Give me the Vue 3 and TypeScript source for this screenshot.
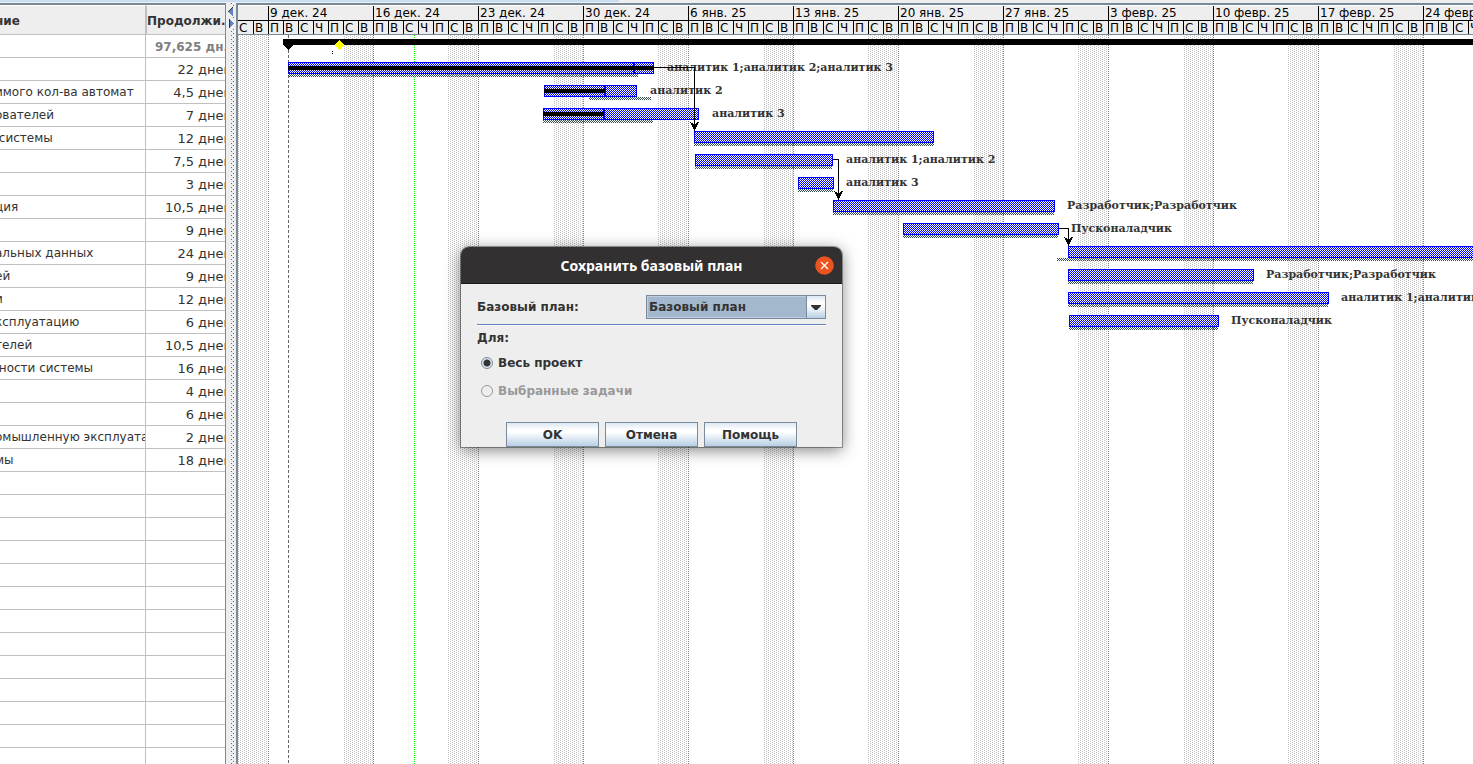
<script setup lang="ts">
import { ref } from 'vue'

interface Row {
  name: string
  duration: string
  total?: boolean
}

interface Bar {
  row: number
  start: number
  end: number
  baseStart: number
  baseEnd: number
  done?: number
  doneEnd?: number
  label?: string
  labelX?: number
}

const filled: Row[] = [
  { name: '', duration: '97,625 дн.', total: true },
  { name: '', duration: '22 дней' },
  { name: 'имого кол-ва автомат', duration: '4,5 дней' },
  { name: 'ователей', duration: '7 дней' },
  { name: '\u00a0системы', duration: '12 дней' },
  { name: '', duration: '7,5 дней' },
  { name: '', duration: '3 дней' },
  { name: 'ция', duration: '10,5 дней' },
  { name: '', duration: '9 дней' },
  { name: 'альных данных', duration: '24 дней' },
  { name: 'ей', duration: '9 дней' },
  { name: 'и', duration: '12 дней' },
  { name: 'ксплуатацию', duration: '6 дней' },
  { name: 'телей', duration: '10,5 дней' },
  { name: '\u00a0ности системы', duration: '16 дней' },
  { name: '', duration: '4 дней' },
  { name: '', duration: '6 дней' },
  { name: 'омышленную эксплуатацию', duration: '2 дней' },
  { name: 'мы', duration: '18 дней' },
]
const rows: Row[] = [...filled, ...Array.from({ length: 14 }, () => ({ name: '', duration: '' }))]

const weeks = [
  '9 дек. 24', '16 дек. 24', '23 дек. 24', '30 дек. 24', '6 янв. 25', '13 янв. 25',
  '20 янв. 25', '27 янв. 25', '3 февр. 25', '10 февр. 25', '17 февр. 25', '24 февр. 25',
]
const days = ['П', 'В', 'С', 'Ч', 'П', 'С', 'В']

const weekX = (i: number): number => 30 + i * 105
const weekendX = (i: number): number => {
  const x = weekX(i) + 75
  return x + (x % 2)
}

const bars: Bar[] = [
  { row: 0, start: 50, end: 416, baseStart: 50, baseEnd: 400, done: 396, doneEnd: 416, label: 'аналитик 1;аналитик 2;аналитик 3', labelX: 429 },
  { row: 1, start: 306, end: 399, baseStart: 351, baseEnd: 413, done: 367, label: 'аналитик 2', labelX: 412 },
  { row: 2, start: 305, end: 461, baseStart: 305, baseEnd: 415, done: 366, label: 'аналитик 3', labelX: 474 },
  { row: 3, start: 456, end: 696, baseStart: 456, baseEnd: 696 },
  { row: 4, start: 457, end: 595, baseStart: 457, baseEnd: 594, label: 'аналитик 1;аналитик 2', labelX: 608 },
  { row: 5, start: 560, end: 596, baseStart: 560, baseEnd: 595, label: 'аналитик 3', labelX: 608 },
  { row: 6, start: 595, end: 817, baseStart: 595, baseEnd: 816, label: 'Разработчик;Разработчик', labelX: 829 },
  { row: 7, start: 665, end: 821, baseStart: 665, baseEnd: 820, label: 'Пусконаладчик', labelX: 833 },
  { row: 8, start: 830, end: 1400, baseStart: 819, baseEnd: 1400 },
  { row: 9, start: 830, end: 1016, baseStart: 830, baseEnd: 1015, label: 'Разработчик;Разработчик', labelX: 1028 },
  { row: 10, start: 830, end: 1091, baseStart: 830, baseEnd: 1090, label: 'аналитик 1;аналитик 2', labelX: 1103 },
  { row: 11, start: 831, end: 981, baseStart: 831, baseEnd: 980, label: 'Пусконаладчик', labelX: 993 },
]
const barY = (b: Bar): number => 27 + b.row * 23

const links = [
  { from: 416, y: 32, to: 456, bottom: 95 },
  { from: 595, y: 124, to: 600, bottom: 164 },
  { from: 821, y: 193, to: 830, bottom: 210 },
]

const plan = ref('Базовый план')
const scope = ref('all')
</script>

<template>
  <div class="app">
    <div class="strip"><div class="strip-tabs"></div></div>
    <div class="panes">
      <section class="sheet">
        <table>
          <colgroup><col class="c-name" /><col class="c-dur" /></colgroup>
          <thead>
            <tr><th>ние</th><th>Продолжи...</th></tr>
          </thead>
          <tbody>
            <tr v-for="(r, i) in rows" :key="i" :class="{ total: r.total }">
              <td>{{ r.name }}</td>
              <td>{{ r.duration }}</td>
            </tr>
          </tbody>
        </table>
      </section>

      <div class="splitter">
        <svg class="grip" width="10" height="100%" shape-rendering="crispEdges">
          <defs>
            <pattern id="grip" x="1" width="4" height="4" patternUnits="userSpaceOnUse">
              <rect width="1" height="1" fill="#5f6b76" /><rect x="2" y="2" width="1" height="1" fill="#5f6b76" />
            </pattern>
          </defs>
          <rect x="5" width="3" height="100%" fill="url(#grip)" />
        </svg>
        <div class="toggles">
          <button type="button" aria-label="Свернуть влево">
            <svg width="6" height="9" shape-rendering="crispEdges"><path d="M5 0v9L0 4.500z" fill="#6382bf" /><path d="M5 0L0 5" stroke="#333" /></svg>
          </button>
          <button type="button" aria-label="Свернуть вправо">
            <svg width="6" height="9" shape-rendering="crispEdges"><path d="M1 0v9L6 4.500z" fill="#6382bf" /><path d="M1 0v9" stroke="#333" /></svg>
          </button>
        </div>
      </div>

      <section class="gantt">
        <header class="timeline">
          <div class="week lead">
            <div class="week-name"></div>
            <div class="days"><span>С</span><span>В</span></div>
          </div>
          <div v-for="w in weeks" :key="w" class="week">
            <div class="week-name">{{ w }}</div>
            <div class="days"><span v-for="(d, j) in days" :key="j">{{ d }}</span></div>
          </div>
        </header>
        <svg class="chart" shape-rendering="crispEdges">
          <defs>
            <pattern id="weekend" width="4" height="2" patternUnits="userSpaceOnUse">
              <path d="M0 0h1v1h-1zM2 1h1v1h-1z" fill="#c0c0c0" />
            </pattern>
            <pattern id="task" width="2" height="2" patternUnits="userSpaceOnUse">
              <rect width="2" height="2" fill="#fff" /><path d="M0 0h1v1h-1zM1 1h1v1h-1z" fill="#00f" />
            </pattern>
            <pattern id="base" width="2" height="2" patternUnits="userSpaceOnUse">
              <path d="M0 0h1v1h-1zM1 1h1v1h-1z" fill="#2f4f4f" />
            </pattern>
          </defs>

          <rect x="0" y="0" width="30" height="100%" fill="url(#weekend)" />
          <g v-for="(w, i) in weeks" :key="w">
            <rect :x="weekendX(i)" y="0" :width="weekX(i + 1) - weekendX(i)" height="100%" fill="url(#weekend)" />
            <line :x1="weekX(i) + 0.5" y1="0" :x2="weekX(i) + 0.5" y2="100%" class="week-line" />
          </g>
          <line x1="50.5" y1="0" x2="50.5" y2="100%" class="start-line" />
          <line x1="176.5" y1="0" x2="176.5" y2="100%" class="today-line" />

          <rect x="45" y="4" width="100%" height="6" />
          <path d="M45 10h10l-5 5z" />
          <path d="M101 5l5 5-5 5-5-5z" fill="#ff0" />
          <path d="M94 16h1v1h-1zM94 18h1v1h-1z" />

          <g v-for="b in bars" :key="b.row">
            <rect :x="b.start" :y="barY(b)" :width="b.end - b.start" height="12" fill="url(#task)" />
            <rect :x="b.start + 0.5" :y="barY(b) + 0.5" :width="b.end - b.start - 1" height="11" fill="none" stroke="#00f" />
            <template v-if="b.done">
              <rect :x="b.done - 1" :y="barY(b)" width="2" height="12" fill="#00f" />
              <rect :x="b.start" :y="barY(b) + 4" :width="(b.doneEnd ?? b.done) - b.start" height="4" />
            </template>
            <rect :x="b.baseStart" :y="barY(b) + 12" :width="b.baseEnd - b.baseStart" height="3" fill="url(#base)" />
            <text v-if="b.label" :x="b.labelX" :y="barY(b) + 9">{{ b.label }}</text>
          </g>

          <g v-for="l in links" :key="l.from">
            <path :d="`M${l.from} ${l.y + 0.5}H${l.to + 0.5}V${l.bottom}`" fill="none" stroke="#000" />
            <path :d="`M${l.to + 0.5} ${l.bottom + 1}l-5 -10 4 3h2l4 -3z`" />
          </g>
        </svg>
      </section>
    </div>

    <form class="dialog" role="dialog" aria-labelledby="dlg-title" @submit.prevent>
      <div class="titlebar">
        <h1 id="dlg-title">Сохранить базовый план</h1>
        <button type="button" class="close" aria-label="Закрыть">
          <svg width="19" height="19" viewBox="0 0 19 19"><circle cx="9.500" cy="9.500" r="9.300" fill="#e95420" /><path d="M6 6l7 7M13 6l-7 7" stroke="#fff" stroke-width="1.300" /></svg>
        </button>
      </div>
      <div class="body">
        <div class="field">
          <label for="plan">Базовый план:</label>
          <div class="combo">
            <select id="plan" v-model="plan"><option>Базовый план</option></select>
            <svg class="arrow" width="19" height="22"><path d="M4 9h10v1l-4 4h-2l-4 -4z" fill="#333" /></svg>
          </div>
        </div>
        <hr />
        <fieldset>
          <legend>Для:</legend>
          <label><input v-model="scope" type="radio" name="scope" value="all" />Весь проект</label>
          <label class="off"><input v-model="scope" type="radio" name="scope" value="selected" disabled />Выбранные задачи</label>
        </fieldset>
        <div class="actions">
          <button type="submit">OK</button>
          <button type="button">Отмена</button>
          <button type="button">Помощь</button>
        </div>
      </div>
    </form>
  </div>
</template>

<style>
body {
  margin: 0;
  overflow: hidden;
}
</style>

<style scoped>
.app {
  position: relative;
  display: flex;
  flex-direction: column;
  height: 100vh;
  overflow: hidden;
  background: #eee;
  color: #333;
  font: 12px "DejaVu Sans", sans-serif;
}
.strip {
  flex: none;
  height: 3px;
}
.strip-tabs {
  width: 42%;
  height: 2px;
  background: #c8ddf2;
}
.panes {
  flex: 1;
  display: flex;
  min-height: 0;
}
.sheet {
  flex: none;
  width: 225px;
  overflow: hidden;
  border-top: 2px solid #7a8a99;
  border-right: 1px solid #7a8a99;
  background: #fff;
}
table {
  width: 232px;
  table-layout: fixed;
  border-collapse: separate;
  border-spacing: 0;
}
.c-name {
  width: 146px;
}
th,
td {
  box-sizing: border-box;
  padding: 0;
  overflow: hidden;
  white-space: nowrap;
  border-right: 1px solid #c0c0c0;
  border-bottom: 1px solid #c0c0c0;
}
th {
  height: 30px;
  padding-top: 1px;
  border-top: 1px solid #fff;
  background: #eee;
  text-align: left;
}
th + th {
  border-left: 1px solid #c0c0c0;
}
th:first-child,
td:first-child {
  text-indent: -5px;
}
td {
  height: 23px;
  line-height: 22px;
}
td + td {
  padding-top: 1px;
  line-height: 21px;
  font-size: 13px;
  text-align: right;
  border-right: 0;
}
.total td + td {
  padding-top: 2px;
  padding-right: 4px;
  line-height: 20px;
  font-size: 12px;
  font-weight: bold;
  color: #808080;
}
.splitter {
  flex: none;
  width: 10px;
  display: grid;
  overflow: hidden;
}
.grip,
.toggles {
  grid-area: 1 / 1;
}
.toggles {
  display: flex;
  flex-direction: column;
  align-items: flex-start;
  gap: 3px;
  padding: 4px 0 0 2px;
}
.toggles button {
  height: 9px;
  padding: 0;
  border: 0;
  background: #eee;
  line-height: 0;
}
.gantt {
  flex: 1;
  min-width: 0;
  display: flex;
  flex-direction: column;
  overflow: hidden;
  border-top: 2px solid #7a8a99;
  border-left: 2px solid #7a8a99;
  background: #fff;
}
.timeline {
  flex: none;
  display: flex;
  height: 28px;
  border-top: 1px solid #fff;
  border-bottom: 1px solid #7a8a99;
  background: #eee;
  color: #000;
}
.week {
  flex: none;
  width: 104px;
  border-left: 1px solid #000;
}
.week.lead {
  width: 30px;
  border-left: 0;
}
.week-name {
  height: 14px;
  padding-left: 1px;
  line-height: 15px;
  white-space: nowrap;
  border-bottom: 1px solid #000;
}
.days {
  display: flex;
  height: 13px;
  line-height: 14px;
}
.days span {
  box-sizing: border-box;
  width: 15px;
  padding-left: 1px;
  border-left: 1px solid #000;
}
.days span:first-child {
  width: 14px;
  border-left: 0;
}
.lead .days span:first-child {
  width: 15px;
}
.chart {
  flex: 1;
  display: block;
  width: 100%;
  min-height: 0;
}
.chart text {
  font: bold 11px "DejaVu Serif", serif;
  fill: #333;
}
.week-line {
  stroke: #808080;
  stroke-dasharray: 1 1;
}
.start-line {
  stroke: #666;
  stroke-dasharray: 3 2;
}
.today-line {
  stroke: #0f0;
  stroke-dasharray: 1 1;
}
.dialog {
  position: absolute;
  top: 247px;
  left: 461px;
  width: 381px;
  border-radius: 8px 8px 0 0;
  overflow: hidden;
  background: #eee;
  box-shadow: 0 0 0 1px rgba(0, 0, 0, 0.35), 0 3px 16px rgba(0, 0, 0, 0.5);
  font-weight: bold;
}
.titlebar {
  display: grid;
  grid-template-columns: 1fr auto 1fr;
  align-items: center;
  height: 36px;
  border-bottom: 1px solid #1a1919;
  background: #333031;
}
.titlebar h1 {
  grid-column: 2;
  margin: 0;
  color: #fff;
  font: bold 14px "Noto Sans", sans-serif;
}
.close {
  justify-self: end;
  height: 19px;
  margin-right: 8px;
  padding: 0;
  border: 0;
  background: none;
  line-height: 0;
}
.body {
  padding: 11px 16px 0;
}
.field {
  display: flex;
  align-items: center;
  justify-content: space-between;
}
.combo {
  position: relative;
  width: 180px;
  height: 24px;
}
.combo select {
  appearance: none;
  box-sizing: border-box;
  width: 100%;
  height: 100%;
  padding: 0 20px 0 2px;
  border: 1px solid #7a8a99;
  border-radius: 0;
  outline: 1px solid #b8cfe5;
  outline-offset: -2px;
  background: #a3b8cc;
  color: #333;
  font: inherit;
}
.arrow {
  position: absolute;
  top: 1px;
  right: 1px;
  width: 18px;
  border-left: 1px solid #7a8a99;
  background: linear-gradient(#dde8f3, #fff 30%, #fff 45%, #b8cfe5);
  pointer-events: none;
}
hr {
  height: 1px;
  margin: 5px 0 0;
  border: 0;
  border-bottom: 1px solid #fff;
  background: #6382bf;
}
fieldset {
  display: flex;
  flex-direction: column;
  margin: 0;
  padding: 0;
  border: 0;
}
legend {
  padding: 2px 0 0;
  line-height: 21px;
}
fieldset label {
  display: flex;
  align-items: center;
  gap: 5px;
  height: 28px;
  padding-left: 4px;
}
fieldset .off {
  color: #999;
}
fieldset input {
  appearance: none;
  box-sizing: border-box;
  width: 12px;
  height: 12px;
  margin: 0;
  border: 1px solid #7a8a99;
  border-radius: 50%;
}
fieldset input:checked {
  background: radial-gradient(circle, #333 0 3px, #dde8f3 4px);
}
fieldset input:disabled {
  border-color: #999;
}
.actions {
  display: flex;
  justify-content: center;
  gap: 6px;
  margin-top: 17px;
}
.actions button {
  box-sizing: border-box;
  width: 93px;
  height: 25px;
  padding: 0;
  border: 1px solid #7a8a99;
  background: linear-gradient(#dde8f3, #fff 30%, #fff 40%, #b8cfe5);
  color: #333;
  font: inherit;
}
</style>
